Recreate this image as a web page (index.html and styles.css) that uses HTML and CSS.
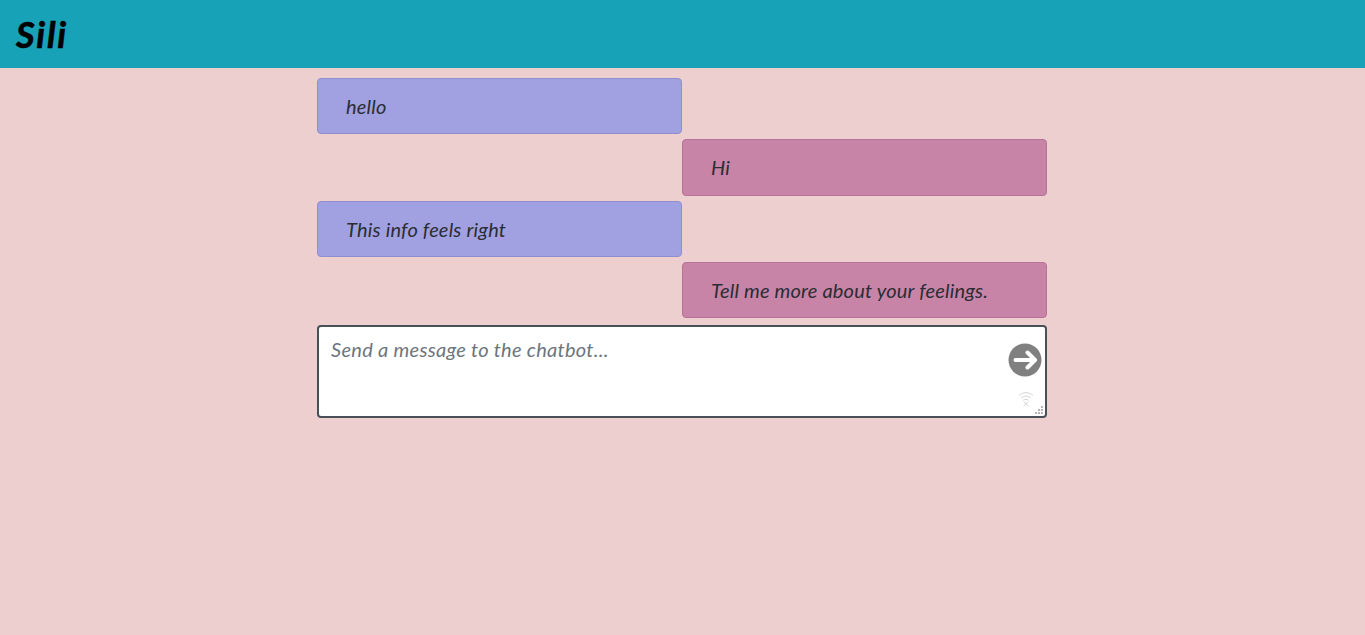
FILE: index.html
```html
<!DOCTYPE html>
<html lang="en">
<head>
<meta charset="utf-8">
<title>Sili</title>
<link rel="stylesheet" href="styles.css">
</head>
<body>
<header class="topbar"><h1 class="brand">Sili</h1></header>
<main class="chat">
  <div class="msg msg-user">hello</div>
  <div class="msg msg-bot">Hi</div>
  <div class="msg msg-user">This info feels right</div>
  <div class="msg msg-bot">Tell me more about your feelings.</div>
  <form class="composer">
    <textarea class="input" placeholder="Send a message to the chatbot..."></textarea>
    <button class="send" type="button" aria-label="Send">
      <svg viewBox="0 0 34 34" width="34" height="34"><circle cx="17" cy="17" r="16.5" fill="#808080"/><path d="M7.500 17H27M19.500 9.500l7.500 7.500-7.500 7.500" fill="none" stroke="#fff" stroke-width="4" stroke-linecap="round" stroke-linejoin="round"/></svg>
    </button>
    <svg class="status" viewBox="0 0 16 16" width="16" height="16"><path d="M1 4.500C5 .8 11 .8 15 4.500M3.300 7C6.200 4.500 9.800 4.500 12.700 7M5.500 9.200C7 8 9 8 10.500 9.200M5.600 10.500l4.800 4.500M10.400 10.500l-4.800 4.500" fill="none" stroke="#d4d4d4" stroke-width="1"/></svg>
    <svg class="grip" viewBox="0 0 8 8" width="8" height="8"><path d="M6 0h2v2H6zM3 3h2v2H3zM6 3h2v2H6zM0 6h2v2H0zM3 6h2v2H3zM6 6h2v2H6z" fill="#b5b5b5"/></svg>
  </form>
</main>
</body>
</html>
```
FILE: styles.css
```css
* { box-sizing: border-box; }
html, body { height: 100%; }
body {
  margin: 0;
  padding-right: 1px;
  background: #edcfd0;
  font-family: "Lato", "Open Sans", sans-serif;
  overflow: hidden;
}
.topbar {
  height: 68px;
  margin-right: -1px;
  background: #17a2b8;
  display: flex;
  align-items: center;
  padding-left: 16px;
}
.brand {
  margin: 0;
  font-family: "Lato", sans-serif;
  font-size: 36px;
  font-weight: 700;
  font-style: italic;
  color: #000;
  line-height: 1;
  letter-spacing: 1.8px;
  -webkit-text-stroke: 0.6px #000;
}
.chat {
  width: 730px;
  margin: 0 auto;
  padding-top: 10px;
  display: flex;
  flex-direction: column;
}
.msg {
  width: 365px;
  height: 56.33px;
  margin-bottom: 5px;
  padding: 0 28px;
  display: flex;
  align-items: center;
  border-radius: 4px;
  font-size: 20px;
  font-style: italic;
  letter-spacing: 0.2px;
  color: #2a2d33;
}
.msg-user { background: #a1a1e1; border: 1px solid #8f8fd0; }
.msg-bot { background: #c884a7; border: 1px solid #b67297; align-self: flex-end; }
.composer { position: relative; height: 93px; margin-top: 2px; }
.input {
  display: block;
  width: 100%;
  height: 100%;
  padding: 10px 12px;
  border: 2px solid #495057;
  border-radius: 4px;
  background: #fff;
  font-family: inherit;
  font-size: 20px;
  font-style: italic;
  letter-spacing: 0.3px;
  color: #495057;
  outline: none;
  resize: none;
}
.input::placeholder { color: #6c757d; opacity: 1; }
.send {
  position: absolute;
  top: 18px;
  right: 5px;
  width: 34px;
  height: 34px;
  padding: 0;
  border: 0;
  background: none;
  display: flex;
}
.status { position: absolute; right: 13px; bottom: 11px; }
.grip { position: absolute; right: 4px; bottom: 4px; }
```
